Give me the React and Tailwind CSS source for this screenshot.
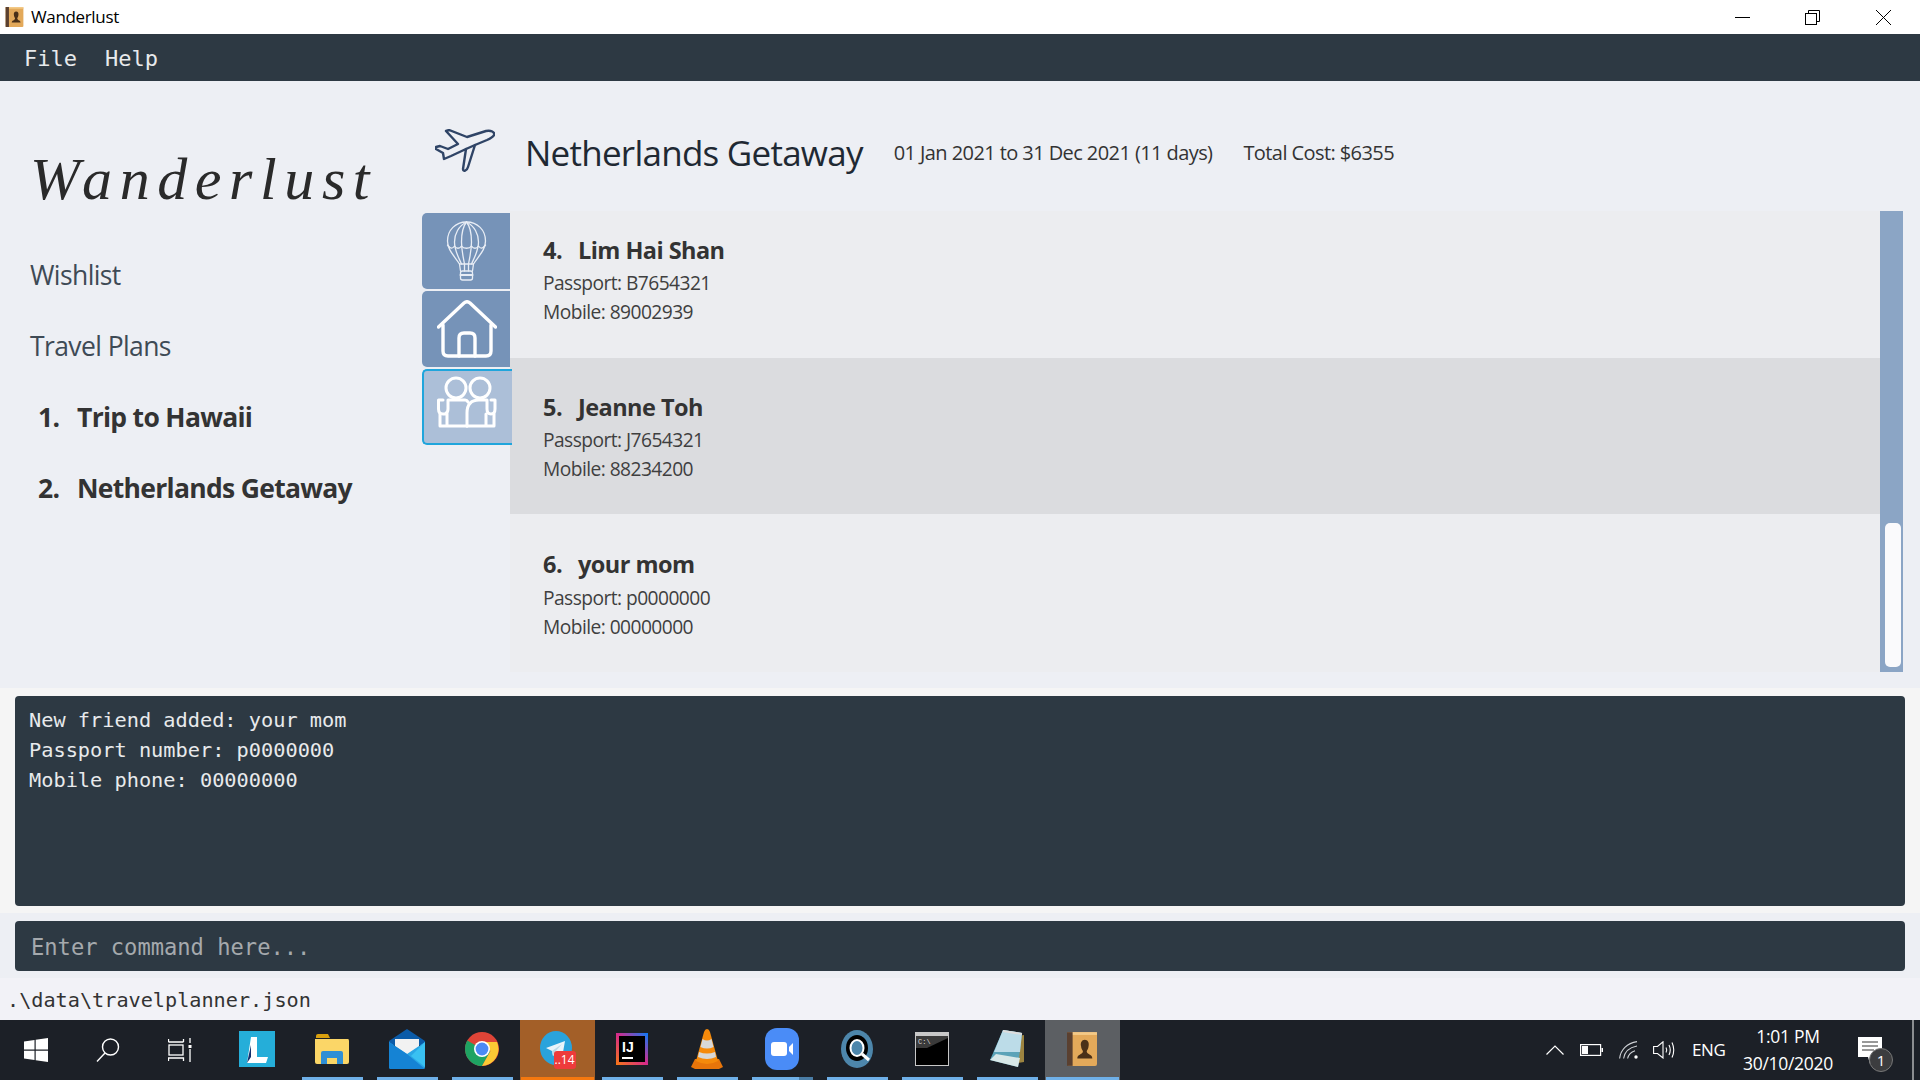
const SANS = "font-['Open_Sans','Noto_Sans',sans-serif]";

function Plane({ className }) {
  return (
    <svg viewBox="0 0 60 44" className={className} fill="none" stroke="#2f4466" strokeWidth="2.4" strokeLinejoin="round" strokeLinecap="round">
      <path d="M11 2 L14 1 L32 8 L51 2 C56 1 60 3 59 6 C58 8 56 9 52 11 L40 16 L33 38 C32 42 28 43 28 40 L31 20 L16 27 L9 30 L8 24 L1 20 L1 18 L5 17 L13 20 L23 15 Z" />
      <path d="M40 16 L31 20" />
    </svg>
  );
}

function Balloon() {
  return (
    <svg viewBox="0 0 40 60" className="w-[41px] h-[60px]" fill="none" stroke="#e8edf5" strokeWidth="1.3" strokeLinecap="round" strokeLinejoin="round">
      <path d="M20 1 C9 1 1 9 1 20 C1 29 8 35 13 43 L27 43 C32 35 39 29 39 20 C39 9 31 1 20 1 Z" />
      <path d="M20 1 C12 5 8 13 8 21 C8 30 12 36 15 43" />
      <path d="M20 1 C28 5 32 13 32 21 C32 30 28 36 25 43" />
      <path d="M20 1 C16 6 15 14 15 21 C15 30 17 37 18 43" />
      <path d="M20 1 C24 6 25 14 25 21 C25 30 23 37 22 43" />
      <path d="M1 24 C4 28 6 28 8 25 C10 28 13 28 15 25 C17 28 23 28 25 25 C27 28 30 28 32 25 C34 28 36 28 39 24" />
      <path d="M13 43 L14 50 M27 43 L26 50 M18 43 L18 50 M22 43 L22 50" />
      <rect x="14" y="50" width="12" height="9" rx="2" />
      <path d="M14 54 H26" strokeWidth="2" />
    </svg>
  );
}

function House() {
  return (
    <svg viewBox="0 0 60 58" className="w-[60px] h-[58px]" fill="none" stroke="#fff" strokeWidth="3.4" strokeLinecap="round" strokeLinejoin="round">
      <path d="M1.5 27 L27 3 Q30 0.5 33 3 L58.5 27" />
      <path d="M6 25 V51 Q6 56 11 56 H49 Q54 56 54 51 V25" />
      <path d="M22 56 V38 Q22 33 27 33 H33 Q38 33 38 38 V56" />
    </svg>
  );
}

function Friends() {
  return (
    <svg viewBox="0 0 60 52" className="w-[60px] h-[52px]" fill="none" stroke="#fff" strokeWidth="3" strokeLinecap="round" strokeLinejoin="round">
      <circle cx="19" cy="12" r="10" />
      <circle cx="43" cy="12" r="10" />
      <path d="M30 50 H3 V38 M10 50 V38" />
      <path d="M6 24 H1.5 V33 Q1.5 38 6 38 H8 Q11 37 11 33 V24 H28 Q30 24 31 26" />
      <path d="M30 50 V37 Q30 24 42 24 H50 V33 Q50 38 54 38 Q58 38 58 33 V24 H54" />
      <path d="M30 50 H57 V38 M49 50 V38" />
    </svg>
  );
}

function WinLogo() {
  return (
    <svg viewBox="0 0 24 24" className="w-[24px] h-[24px]" fill="#fff">
      <path d="M0 3.5 L10.5 2 V11.5 H0 Z M11.7 1.8 L24 0 V11.5 H11.7 Z M0 12.7 H10.5 V22 L0 20.5 Z M11.7 12.7 H24 V24 L11.7 22.2 Z" />
    </svg>
  );
}

function SearchIco() {
  return (
    <svg viewBox="0 0 24 24" className="w-[24px] h-[24px]" fill="none" stroke="#fff" strokeWidth="1.4">
      <circle cx="14.5" cy="9" r="8" />
      <path d="M9 15 L1 23.5" />
    </svg>
  );
}

function TaskView() {
  return (
    <svg viewBox="0 0 24 24" className="w-[24px] h-[24px]" fill="none" stroke="#fff" strokeWidth="1.3">
      <path d="M0.5 4 V1 M15.5 1 V4 M0.5 4 H15.5" />
      <rect x="1" y="7" width="14" height="10" />
      <path d="M0.5 23 V20 H15.5 V23" />
      <path d="M22 0 V5 M22 11 V24" />
      <rect x="20.5" y="7" width="3" height="3" fill="#fff" stroke="none" />
    </svg>
  );
}

function LApp() {
  return (
    <svg viewBox="0 0 36 36" className="w-[36px] h-[36px]">
      <rect width="36" height="36" fill="#25aed9" />
      <path d="M12 6 H18 V26 H29 L27 32 H8 Z" fill="#fff" />
      <path d="M12 14 V26 L8 32 Z" fill="#12306e" />
    </svg>
  );
}

function Folder() {
  return (
    <svg viewBox="0 0 34 32" className="w-[34px] h-[32px]">
      <path d="M1 3 Q1 1 3 1 H13 L15 5 H1 Z" fill="#d9a00e" />
      <path d="M0 6 H33 Q34 6 34 8 V29 Q34 31 32 31 H2 Q0 31 0 29 Z" fill="#fbd667" />
      <path d="M6 31 V20 Q6 18 8 18 H26 Q28 18 28 20 V31 H22 V25 H12 V31 Z" fill="#2f8fd6" />
    </svg>
  );
}

function Mail() {
  return (
    <svg viewBox="0 0 36 40" className="w-[36px] h-[40px]">
      <path d="M0 12 L18 0 L36 12 V16 H0 Z" fill="#0b5ba8" />
      <path d="M6 10 H30 V18 L18 26 L6 18 Z" fill="#f2f2f2" />
      <path d="M0 13 L18 25 L36 13 V38 Q36 40 34 40 H2 Q0 40 0 38 Z" fill="#2aa7e6" />
      <path d="M0 38 V13 L18 25 L36 40 H2 Q0 40 0 38 Z" fill="#1583d4" />
      <path d="M36 13 V38 L22 27 Z" fill="#39c1f2" />
    </svg>
  );
}

function Chrome() {
  return (
    <svg viewBox="0 0 34 34" className="w-[34px] h-[34px]">
      <circle cx="17" cy="17" r="17" fill="#de4437" />
      <path d="M17 17 L2.3 8.5 A17 17 0 0 0 17 34 L25.5 19 Z" fill="#1ea362" />
      <path d="M17 10 H32 A17 17 0 0 1 17 34 L25.5 19 Z" fill="#fcc934" />
      <circle cx="17" cy="17" r="8" fill="#fff" />
      <circle cx="17" cy="17" r="6.4" fill="#4a8af4" />
    </svg>
  );
}

function Telegram() {
  return (
    <div className="relative w-[34px] h-[36px]">
      <svg viewBox="0 0 34 36" className="w-[34px] h-[36px]">
        <ellipse cx="16" cy="17" rx="16" ry="17" fill="#2aa3dc" />
        <path d="M6 17 L25 10 L22 27 L16 22 L13 25 L12 20 Z" fill="#e9f4fa" />
        <path d="M12 20 L22 13 L15 21 L13 25 Z" fill="#bcd9e8" />
      </svg>
      <span className="absolute left-[14px] top-[20px] w-[22px] h-[18px] rounded-[3px] bg-[#ee3b3b] text-white text-[12px] leading-[18px] text-center font-['Open_Sans',sans-serif]">..14</span>
    </div>
  );
}

function Idea() {
  return (
    <svg viewBox="0 0 32 32" className="w-[32px] h-[32px]">
      <defs>
        <linearGradient id="ij" x1="0" y1="1" x2="1" y2="0">
          <stop offset="0" stopColor="#f97a12" />
          <stop offset="0.5" stopColor="#d62a8a" />
          <stop offset="1" stopColor="#087cfa" />
        </linearGradient>
      </defs>
      <rect width="32" height="32" fill="url(#ij)" />
      <rect x="3" y="3" width="26" height="26" fill="#000" />
      <rect x="6" y="24" width="11" height="2" fill="#fff" />
      <text x="6" y="19" fill="#fff" fontSize="14" fontWeight="700" fontFamily="'Liberation Sans',sans-serif">IJ</text>
    </svg>
  );
}

function Vlc() {
  return (
    <svg viewBox="0 0 32 40" className="w-[32px] h-[40px]">
      <path d="M0 38 L4 30 H28 L32 38 L28 40 H4 Z" fill="#e8750a" />
      <path d="M16 0 Q18 0 19 3 L27 32 Q16 38 5 32 L13 3 Q14 0 16 0 Z" fill="#f58a0b" />
      <path d="M11.5 10 Q16 13 20.5 10 L22.5 18 Q16 21 9.5 18 Z" fill="#d8d8d8" />
      <path d="M8 23 Q16 26 24 23 L25 28 Q16 32 7 28 Z" fill="#d8d8d8" />
    </svg>
  );
}

function Zoom() {
  return (
    <svg viewBox="0 0 34 42" className="w-[34px] h-[42px]">
      <rect width="34" height="42" rx="12" fill="#4a8cf7" />
      <rect x="6" y="14" width="16" height="14" rx="3" fill="#fff" />
      <path d="M24 19 L28 15 V27 L24 23 Z" fill="#fff" />
    </svg>
  );
}

function SearchApp() {
  return (
    <svg viewBox="0 0 32 38" className="w-[32px] h-[38px]">
      <ellipse cx="16" cy="19" rx="16" ry="19" fill="#4d86ab" />
      <ellipse cx="16" cy="18" rx="11" ry="13" fill="#000" />
      <ellipse cx="16" cy="18" rx="6.5" ry="8" fill="#4d86ab" stroke="#fff" strokeWidth="2" />
      <path d="M21 24 L28 30" stroke="#fff" strokeWidth="3" />
    </svg>
  );
}

function Cmd() {
  return (
    <svg viewBox="0 0 34 34" className="w-[34px] h-[34px]">
      <rect width="34" height="34" fill="#c8c8c8" />
      <rect x="1" y="4" width="32" height="29" fill="#000" />
      <path d="M1 4 H33 V6 L12 16 H1 Z" fill="#3a3a3a" />
      <text x="3" y="12" fill="#ddd" fontSize="7" fontFamily="'Liberation Mono',monospace">C:\</text>
    </svg>
  );
}

function Notepad() {
  return (
    <svg viewBox="0 0 34 38" className="w-[34px] h-[38px]">
      <path d="M28 6 L34 5 V32 L28 33 Z" fill="#9d8440" />
      <path d="M13 0 L32 3 L28 37 L0 30 Z" fill="#5ba3b8" />
      <path d="M13 0 L32 3 L30 22 L4 22 Z" fill="#bcdce8" />
      <path d="M28 37 L0 30 L6 24 L30 28 Z" fill="#d8e8e8" />
      <path d="M13 1 L32 4" stroke="#ddd" strokeWidth="2" />
    </svg>
  );
}

function AddressBook({ className }) {
  return (
    <svg viewBox="0 0 32 36" className={className}>
      <rect width="32" height="36" rx="2" fill="#e3a95a" />
      <rect width="32" height="3" fill="#f3c987" />
      <rect width="6" height="36" fill="#5a4030" />
      <path d="M19 8 C22 8 24 11 23 15 C23 18 21 19 21 21 C22 24 27 24 27 28 H11 C11 24 16 24 17 21 C17 19 15 18 15 15 C14 11 16 8 19 8 Z" fill="#4a3018" />
    </svg>
  );
}

function Chevron() {
  return (
    <svg viewBox="0 0 18 10" className="w-[18px] h-[10px]" fill="none" stroke="#fff" strokeWidth="1.2">
      <path d="M0.5 9.5 L9 1 L17.5 9.5" />
    </svg>
  );
}

function Battery() {
  return (
    <svg viewBox="0 0 23 12" className="w-[23px] h-[12px]" fill="none" stroke="#fff" strokeWidth="1.2">
      <rect x="0.6" y="0.6" width="20" height="10.8" />
      <rect x="2" y="2" width="6" height="8" fill="#fff" stroke="none" />
      <rect x="21.5" y="4" width="1.5" height="4" fill="#fff" stroke="none" />
    </svg>
  );
}

function Wifi() {
  return (
    <svg viewBox="0 0 19 18" className="w-[19px] h-[18px]" fill="none" stroke="#cfd2d6" strokeWidth="1.1">
      <path d="M0.6 17.5 C1.5 9 8 2 18 0.6" />
      <path d="M4.6 17.5 C5.5 11.5 10 6.5 18 5" />
      <path d="M8.6 17.5 C9.4 14 12.5 11 16 9.8" />
      <circle cx="17" cy="16" r="1.7" fill="#fff" stroke="none" />
    </svg>
  );
}

function Speaker() {
  return (
    <svg viewBox="0 0 22 18" className="w-[22px] h-[18px]" fill="none" stroke="#fff" strokeWidth="1.1">
      <path d="M0.6 5.5 H4.5 L10 0.8 V17 L4.5 12.5 H0.6 Z" />
      <path d="M13 6.5 Q14.5 9 13 11.5" />
      <path d="M16 4 Q18.5 9 16 14" />
      <path d="M19 1.5 Q22.5 9 19 16.5" />
    </svg>
  );
}

function Notification() {
  return (
    <div className="relative w-[24px] h-[20px]">
      <svg viewBox="0 0 24 28" className="w-[24px] h-[28px] absolute left-0 top-0" fill="#fff">
        <path d="M0 0 H24 V20 H16 L12 27 L10 20 H0 Z" />
        <path d="M4 5 H20 M4 9 H20 M4 13 H16" stroke="#333" strokeWidth="1" />
      </svg>
      <span className="absolute left-[11px] top-[11px] w-[24px] h-[24px] rounded-full bg-[#3c3d3f] border border-[#777] text-white text-[15px] leading-[22px] text-center font-['Open_Sans',sans-serif]">1</span>
    </div>
  );
}

function Tile({ bar = "bg-[#6fb0e8]", bg = "", inset = "mx-[7px]", children, split }) {
  return (
    <div className={`w-[75px] h-[60px] flex flex-col ${bg}`}>
      <div className="flex-1 flex items-center justify-center pr-[2px]">{children}</div>
      {bar ? (
        <div className={`h-[3px] flex ${inset} ${bar}`}>
          {split ? <div className="ml-auto w-[14px] h-[3px] bg-[#4a7da6]" /> : null}
        </div>
      ) : (
        <div className="h-[3px]" />
      )}
    </div>
  );
}

function Row({ n, name, passport, mobile, selected, h, pt, mt }) {
  return (
    <div className={`${h} ${pt} pl-[33px] ${selected ? "bg-[#dbdcdf]" : "bg-[#ecedf0]"}`}>
      <div className="text-[23.5px] leading-[32px] font-bold text-[#333] tracking-[-0.55px] flex">
        <span className="w-[35px]">{n}.</span>
        <span>{name}</span>
      </div>
      <div className={`text-[19.2px] leading-[29px] text-[#3f3f3f] tracking-[-0.55px] ${mt}`}>Passport: {passport}</div>
      <div className="text-[19.2px] leading-[29px] text-[#3f3f3f] tracking-[-0.55px]">Mobile: {mobile}</div>
    </div>
  );
}

export default function App() {
  return (
    <div className={`w-[1920px] h-[1080px] flex flex-col overflow-hidden bg-[#edeff4] ${SANS}`}>
      {/* Title bar */}
      <div className="h-[34px] bg-white flex items-center text-black">
        <div className="ml-[3px] w-[22px] h-[22px] flex items-center justify-center">
          <AddressBook className="w-[21px] h-[20px]" />
        </div>
        <span className="ml-[6px] text-[17px] tracking-[-0.35px]">Wanderlust</span>
        <div className="ml-auto flex items-center h-full">
          <div className="w-[70px] flex justify-center">
            <div className="w-[15px] h-[1px] bg-black" />
          </div>
          <div className="w-[71px] flex justify-center">
            <svg viewBox="0 0 15 15" className="w-[15px] h-[15px]" fill="none" stroke="#000" strokeWidth="1">
              <rect x="0.5" y="3.5" width="11" height="11" />
              <path d="M3.5 3.5 V0.5 H14.5 V11.5 H11.5" />
            </svg>
          </div>
          <div className="w-[72px] pr-[2px] flex justify-center">
            <svg viewBox="0 0 15 15" className="w-[15px] h-[15px]" fill="none" stroke="#000" strokeWidth="1">
              <path d="M0 0 L15 15 M15 0 L0 15" />
            </svg>
          </div>
        </div>
      </div>

      {/* Menu */}
      <div className="h-[47px] bg-[#2d3943] flex items-center pl-[24px] pt-[2px] gap-[28px] font-['DejaVu_Sans_Mono',monospace] text-[#e8eaec] text-[22px]">
        <span>File</span>
        <span>Help</span>
      </div>

      {/* Main */}
      <div className="h-[607px] flex bg-[#edeff4]">
        <div className="w-[422px] pl-[30px]">
          <div className="pt-[68px] h-[159px] font-['Liberation_Serif',serif] italic text-[#2a2a2a] text-[60px] leading-[60px] tracking-[7.6px] whitespace-nowrap">
            Wanderlust
          </div>
          <div className="h-[71px] flex items-center text-[26.5px] text-[#3e4a55] tracking-[-0.6px]">Wishlist</div>
          <div className="h-[71px] flex items-center text-[26.5px] text-[#3e4a55] tracking-[-0.6px]">Travel Plans</div>
          <div className="h-[71px] flex items-center pl-[8px] text-[26.5px] font-bold text-[#333] tracking-[-0.7px]">
            <span className="w-[39px]">1.</span>
            <span>Trip to Hawaii</span>
          </div>
          <div className="h-[71px] flex items-center pl-[8px] text-[26.5px] font-bold text-[#333] tracking-[-0.7px]">
            <span className="w-[39px]">2.</span>
            <span>Netherlands Getaway</span>
          </div>
        </div>

        <div className="flex-1 pr-[17px] flex flex-col">
          <div className="h-[130px] flex items-center text-[#222]">
            <Plane className="ml-[13px] mt-[10px] w-[60px] h-[44px]" />
            <span className="ml-[30px] mt-[14px] text-[35px] tracking-[-0.75px] text-[#1f2933]">Netherlands Getaway</span>
            <span className="ml-[31px] mt-[13px] text-[20px] tracking-[-0.58px] text-[#333]">01 Jan 2021 to 31 Dec 2021 (11 days)</span>
            <span className="ml-[31px] mt-[13px] text-[20px] tracking-[-0.58px] text-[#333]">Total Cost: $6355</span>
          </div>
          <div className="h-[461px] flex">
            <div className="w-[88px] pt-[2px] flex flex-col gap-[2px]">
              <div className="h-[76px] rounded-l-[5px] bg-[#7693b8] flex items-center justify-center pl-[1px]"><Balloon /></div>
              <div className="h-[76px] rounded-l-[5px] bg-[#7693b8] flex items-center justify-center pl-[1px]"><House /></div>
              <div className="h-[76px] w-[90px] rounded-l-[5px] bg-[#acbfd8] border-2 border-[#1fa5dc] border-r-0 relative z-10 flex items-start justify-center pt-[5px] pr-[3px]"><Friends /></div>
            </div>
            <div className="flex-1 flex flex-col">
              <Row n={4} name="Lim Hai Shan" passport="B7654321" mobile="89002939" h="h-[147px]" pt="pt-[23px]" mt="mt-[2px]" />
              <Row n={5} name="Jeanne Toh" passport="J7654321" mobile="88234200" h="h-[156px]" pt="pt-[33px]" mt="mt-[2px]" selected />
              <Row n={6} name="your mom" passport="p0000000" mobile="00000000" h="h-[158px]" pt="pt-[34px]" mt="mt-[3px]" />
            </div>
            <div className="w-[23px] bg-[#8ba5c5] pl-[5px] pt-[312px]">
              <div className="w-[16px] h-[144px] rounded-[5px] bg-[#fafafc]" />
            </div>
          </div>
        </div>
      </div>

      {/* Result */}
      <div className="h-[225px] bg-[#f5f5f5] px-[15px] pt-[8px]">
        <div className="h-[210px] rounded-[4px] bg-[#2d3943] pl-[14px] pt-[9px] font-['DejaVu_Sans_Mono',monospace] text-[#e8eaec] text-[20.3px] leading-[30px]">
          <div>New friend added: your mom</div>
          <div>Passport number: p0000000</div>
          <div>Mobile phone: 00000000</div>
        </div>
      </div>

      {/* Command */}
      <div className="h-[65px] bg-[#edeff4] px-[15px] pt-[8px]">
        <div className="h-[50px] rounded-[4px] bg-[#2d3943] flex items-center pl-[16px] pt-[3px] font-['DejaVu_Sans_Mono',monospace] text-[#a5a9ad] text-[22.1px]">
          Enter command here...
        </div>
      </div>

      {/* Status */}
      <div className="h-[42px] bg-[#f2f2f7] flex items-center pl-[7px] pt-[2px] font-['DejaVu_Sans_Mono',monospace] text-[#333] text-[20.2px]">
        .\data\travelplanner.json
      </div>

      {/* Taskbar */}
      <div className="h-[60px] bg-[#1c2027] flex text-white">
        <div className="w-[72px] h-[60px] flex items-center justify-center"><WinLogo /></div>
        <div className="w-[72px] h-[60px] flex items-center justify-center"><SearchIco /></div>
        <div className="w-[72px] h-[60px] flex items-center justify-center"><TaskView /></div>
        <div className="w-[4px]" />
        <Tile bar=""><LApp /></Tile>
        <Tile><Folder /></Tile>
        <Tile><Mail /></Tile>
        <Tile><Chrome /></Tile>
        <Tile bg="bg-[#a35f28]" bar="bg-[#f5780f]" inset="mx-[1px]"><Telegram /></Tile>
        <Tile><Idea /></Tile>
        <Tile><Vlc /></Tile>
        <Tile split><Zoom /></Tile>
        <Tile><SearchApp /></Tile>
        <Tile><Cmd /></Tile>
        <Tile><Notepad /></Tile>
        <Tile bg="bg-[#5c5f63]" inset="mx-[1px]"><AddressBook className="w-[30px] h-[34px]" /></Tile>

        <div className="ml-auto flex items-center h-[60px] pr-[6px]">
          <Chevron />
          <div className="ml-[16px]"><Battery /></div>
          <div className="ml-[16px]"><Wifi /></div>
          <div className="ml-[15px]"><Speaker /></div>
          <span className={`ml-[17px] w-[33px] text-[17px] tracking-[-0.4px] ${SANS}`}>ENG</span>
          <div className={`ml-[16px] w-[94px] flex flex-col items-center text-[17.5px] leading-[27px] tracking-[-0.3px] ${SANS}`}>
            <span>1:01 PM</span>
            <span>30/10/2020</span>
          </div>
          <div className="ml-[23px] mr-[30px] mb-[6px] w-[24px]"><Notification /></div>
          <div className="w-[2px] h-[60px] bg-[#8b8d90]" />
        </div>
      </div>
    </div>
  );
}
